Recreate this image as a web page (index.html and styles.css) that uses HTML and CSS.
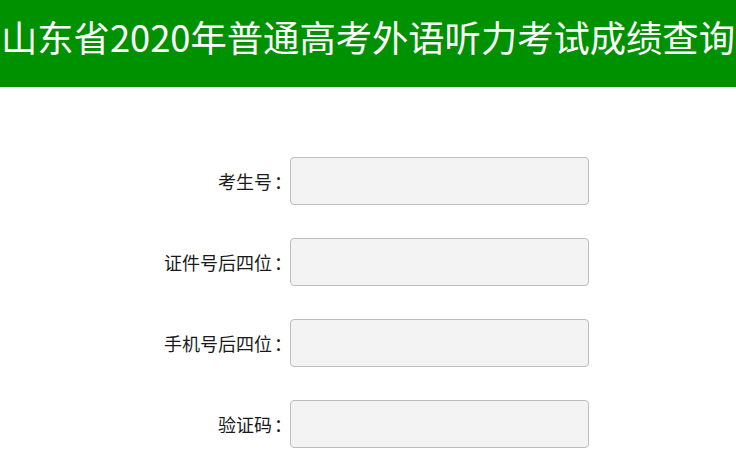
FILE: index.html
```html
<!DOCTYPE html>
<html lang="zh-CN">
<head>
<meta charset="utf-8">
<title>山东省2020年普通高考外语听力考试成绩查询</title>
<link rel="stylesheet" href="styles.css">
</head>
<body>
<header class="banner">
  <h1 class="title">山东省2020年普通高考外语听力考试成绩查询</h1>
</header>
<form class="form">
  <div class="row">
    <label class="label" for="ksh">考生号<span class="colon">：</span></label>
    <input class="field" id="ksh" type="text">
  </div>
  <div class="row">
    <label class="label" for="zjh">证件号后四位<span class="colon">：</span></label>
    <input class="field" id="zjh" type="text">
  </div>
  <div class="row">
    <label class="label" for="sjh">手机号后四位<span class="colon">：</span></label>
    <input class="field" id="sjh" type="text">
  </div>
  <div class="row">
    <label class="label" for="yzm">验证码<span class="colon">：</span></label>
    <input class="field" id="yzm" type="text">
  </div>
</form>
</body>
</html>
```
FILE: styles.css
```css
html, body {
  margin: 0;
  padding: 0;
  background: #ffffff;
  font-family: "Noto Sans CJK SC", "Noto Sans", sans-serif;
  overflow: hidden;
}
.banner {
  background: #009100;
  height: 87px;
  box-sizing: border-box;
  padding-top: 18px;
  display: flex;
  justify-content: center;
  overflow: hidden;
}
.title {
  margin: 0;
  color: #ffffff;
  font-size: 36.3px;
  font-weight: normal;
  white-space: nowrap;
  line-height: 1;
  letter-spacing: 0;
}
.form {
  padding-top: 70px;
  display: flex;
  flex-direction: column;
  gap: 33px;
}
.row {
  display: flex;
  align-items: center;
}
.label {
  width: 288px;
  text-align: right;
  font-size: 18px;
  color: #1a1a1a;
  white-space: nowrap;
}
.colon {
  display: inline-block;
  margin-left: 2px;
  margin-right: -4px;
}
.field {
  box-sizing: border-box;
  margin: 0 0 0 2px;
  width: 299px;
  height: 48px;
  border: 1px solid #bdbdbd;
  border-radius: 4px;
  background: #f3f3f3;
  padding: 0 8px;
  font-size: 16px;
  outline: none;
}
```
